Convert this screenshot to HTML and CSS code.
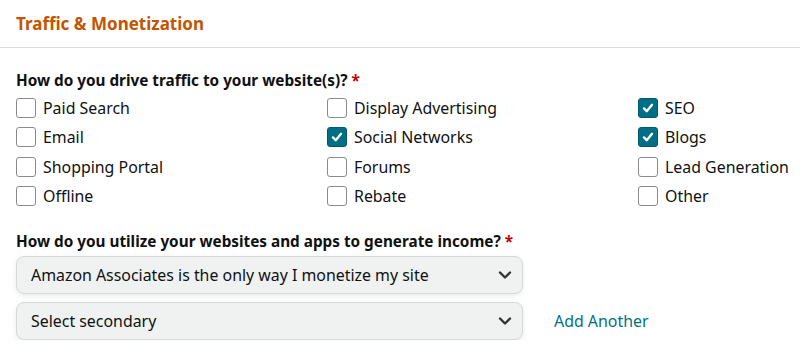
FILE: index.html
```html
<!DOCTYPE html>
<html>
<head>
<meta charset="utf-8">
<link rel="stylesheet" href="styles.css">
</head>
<body>
<div class="header"><h1 class="title">Traffic &amp; Monetization</h1></div>
<div class="content">
  <div class="question">How do you drive traffic to your website(s)? <span class="req">*</span></div>
  <div class="grid">
    <label class="opt"><span class="box"></span>Paid Search</label>
    <label class="opt"><span class="box"></span>Display Advertising</label>
    <label class="opt"><span class="box checked"><svg viewBox="0 0 20 20" width="20" height="20"><path d="M5.5 10.5 L8.6 13.6 L14.5 6.5" fill="none" stroke="#fff" stroke-width="2.6" stroke-linecap="round" stroke-linejoin="round"/></svg></span>SEO</label>
    <label class="opt"><span class="box"></span>Email</label>
    <label class="opt"><span class="box checked"><svg viewBox="0 0 20 20" width="20" height="20"><path d="M5.5 10.5 L8.6 13.6 L14.5 6.5" fill="none" stroke="#fff" stroke-width="2.6" stroke-linecap="round" stroke-linejoin="round"/></svg></span>Social Networks</label>
    <label class="opt"><span class="box checked"><svg viewBox="0 0 20 20" width="20" height="20"><path d="M5.5 10.5 L8.6 13.6 L14.5 6.5" fill="none" stroke="#fff" stroke-width="2.6" stroke-linecap="round" stroke-linejoin="round"/></svg></span>Blogs</label>
    <label class="opt"><span class="box"></span>Shopping Portal</label>
    <label class="opt"><span class="box"></span>Forums</label>
    <label class="opt"><span class="box"></span>Lead Generation</label>
    <label class="opt"><span class="box"></span>Offline</label>
    <label class="opt"><span class="box"></span>Rebate</label>
    <label class="opt"><span class="box"></span>Other</label>
  </div>
  <div class="question q2">How do you utilize your websites and apps to generate income? <span class="req">*</span></div>
  <div class="select-row first">
    <div class="select"><span>Amazon Associates is the only way I monetize my site</span><svg class="chev" viewBox="0 0 14 10" width="14" height="10"><path d="M2 2.5 L7 7.5 L12 2.5" fill="none" stroke="#333" stroke-width="2.4" stroke-linecap="round" stroke-linejoin="round"/></svg></div>
  </div>
  <div class="select-row">
    <div class="select"><span>Select secondary</span><svg class="chev" viewBox="0 0 14 10" width="14" height="10"><path d="M2 2.5 L7 7.5 L12 2.5" fill="none" stroke="#333" stroke-width="2.4" stroke-linecap="round" stroke-linejoin="round"/></svg></div>
    <a class="add" href="#">Add Another</a>
  </div>
</div>
</body>
</html>
```
FILE: styles.css
```css
html, body {
  margin: 0;
  padding: 0;
  background: #fff;
}
body {
  font-family: "Noto Sans", "Liberation Sans", sans-serif;
  color: #0f1111;
  font-size: 15.9px;
}
.header {
  height: 47px;
  border-bottom: 1px solid #dddddd;
  padding: 0 16px;
  display: flex;
  align-items: center;
}
.title {
  margin: 0;
  font-size: 17px;
  font-weight: 700;
  color: #c45500;
  line-height: 22px;
  margin-top: 1px;
}
.content {
  padding: 0 0 0 16px;
}
.question {
  font-weight: 700;
  font-size: 15.3px;
  line-height: 20px;
  margin-top: 22px;
  height: 20px;
}
.req {
  color: #c40000;
}
.grid {
  display: grid;
  grid-template-columns: 311px 311px minmax(0, 1fr);
  grid-auto-rows: 29.5px;
  margin-top: 3px;
}
.opt {
  display: flex;
  align-items: center;
  gap: 7px;
  font-size: 15.9px;
  line-height: 20px;
  white-space: nowrap;
  color: #0f1111;
}
.box {
  box-sizing: border-box;
  width: 20px;
  height: 20px;
  border: 1px solid #888c8c;
  border-radius: 3px;
  background: #fff;
  display: flex;
  align-items: center;
  justify-content: center;
  flex: none;
}
.box.checked {
  background: #006f86;
  border-color: #005a6e;
}
.box svg {
  display: block;
}
.q2 {
  margin-top: 20px;
}
.select-row {
  display: flex;
  align-items: center;
  gap: 31px;
  margin-top: 8px;
}
.select-row.first {
  margin-top: 5px;
}
.select {
  box-sizing: border-box;
  width: 507px;
  height: 38px;
  background: #f0f2f2;
  border: 1px solid #d5d9d9;
  border-radius: 8px;
  box-shadow: 0 2px 5px rgba(213, 217, 217, 0.5);
  display: flex;
  align-items: center;
  justify-content: space-between;
  padding: 0 10px 0 14px;
  font-size: 15.9px;
  color: #0f1111;
}
.chev {
  display: block;
}
.add {
  color: #007185;
  text-decoration: none;
  font-size: 15.9px;
}
```
